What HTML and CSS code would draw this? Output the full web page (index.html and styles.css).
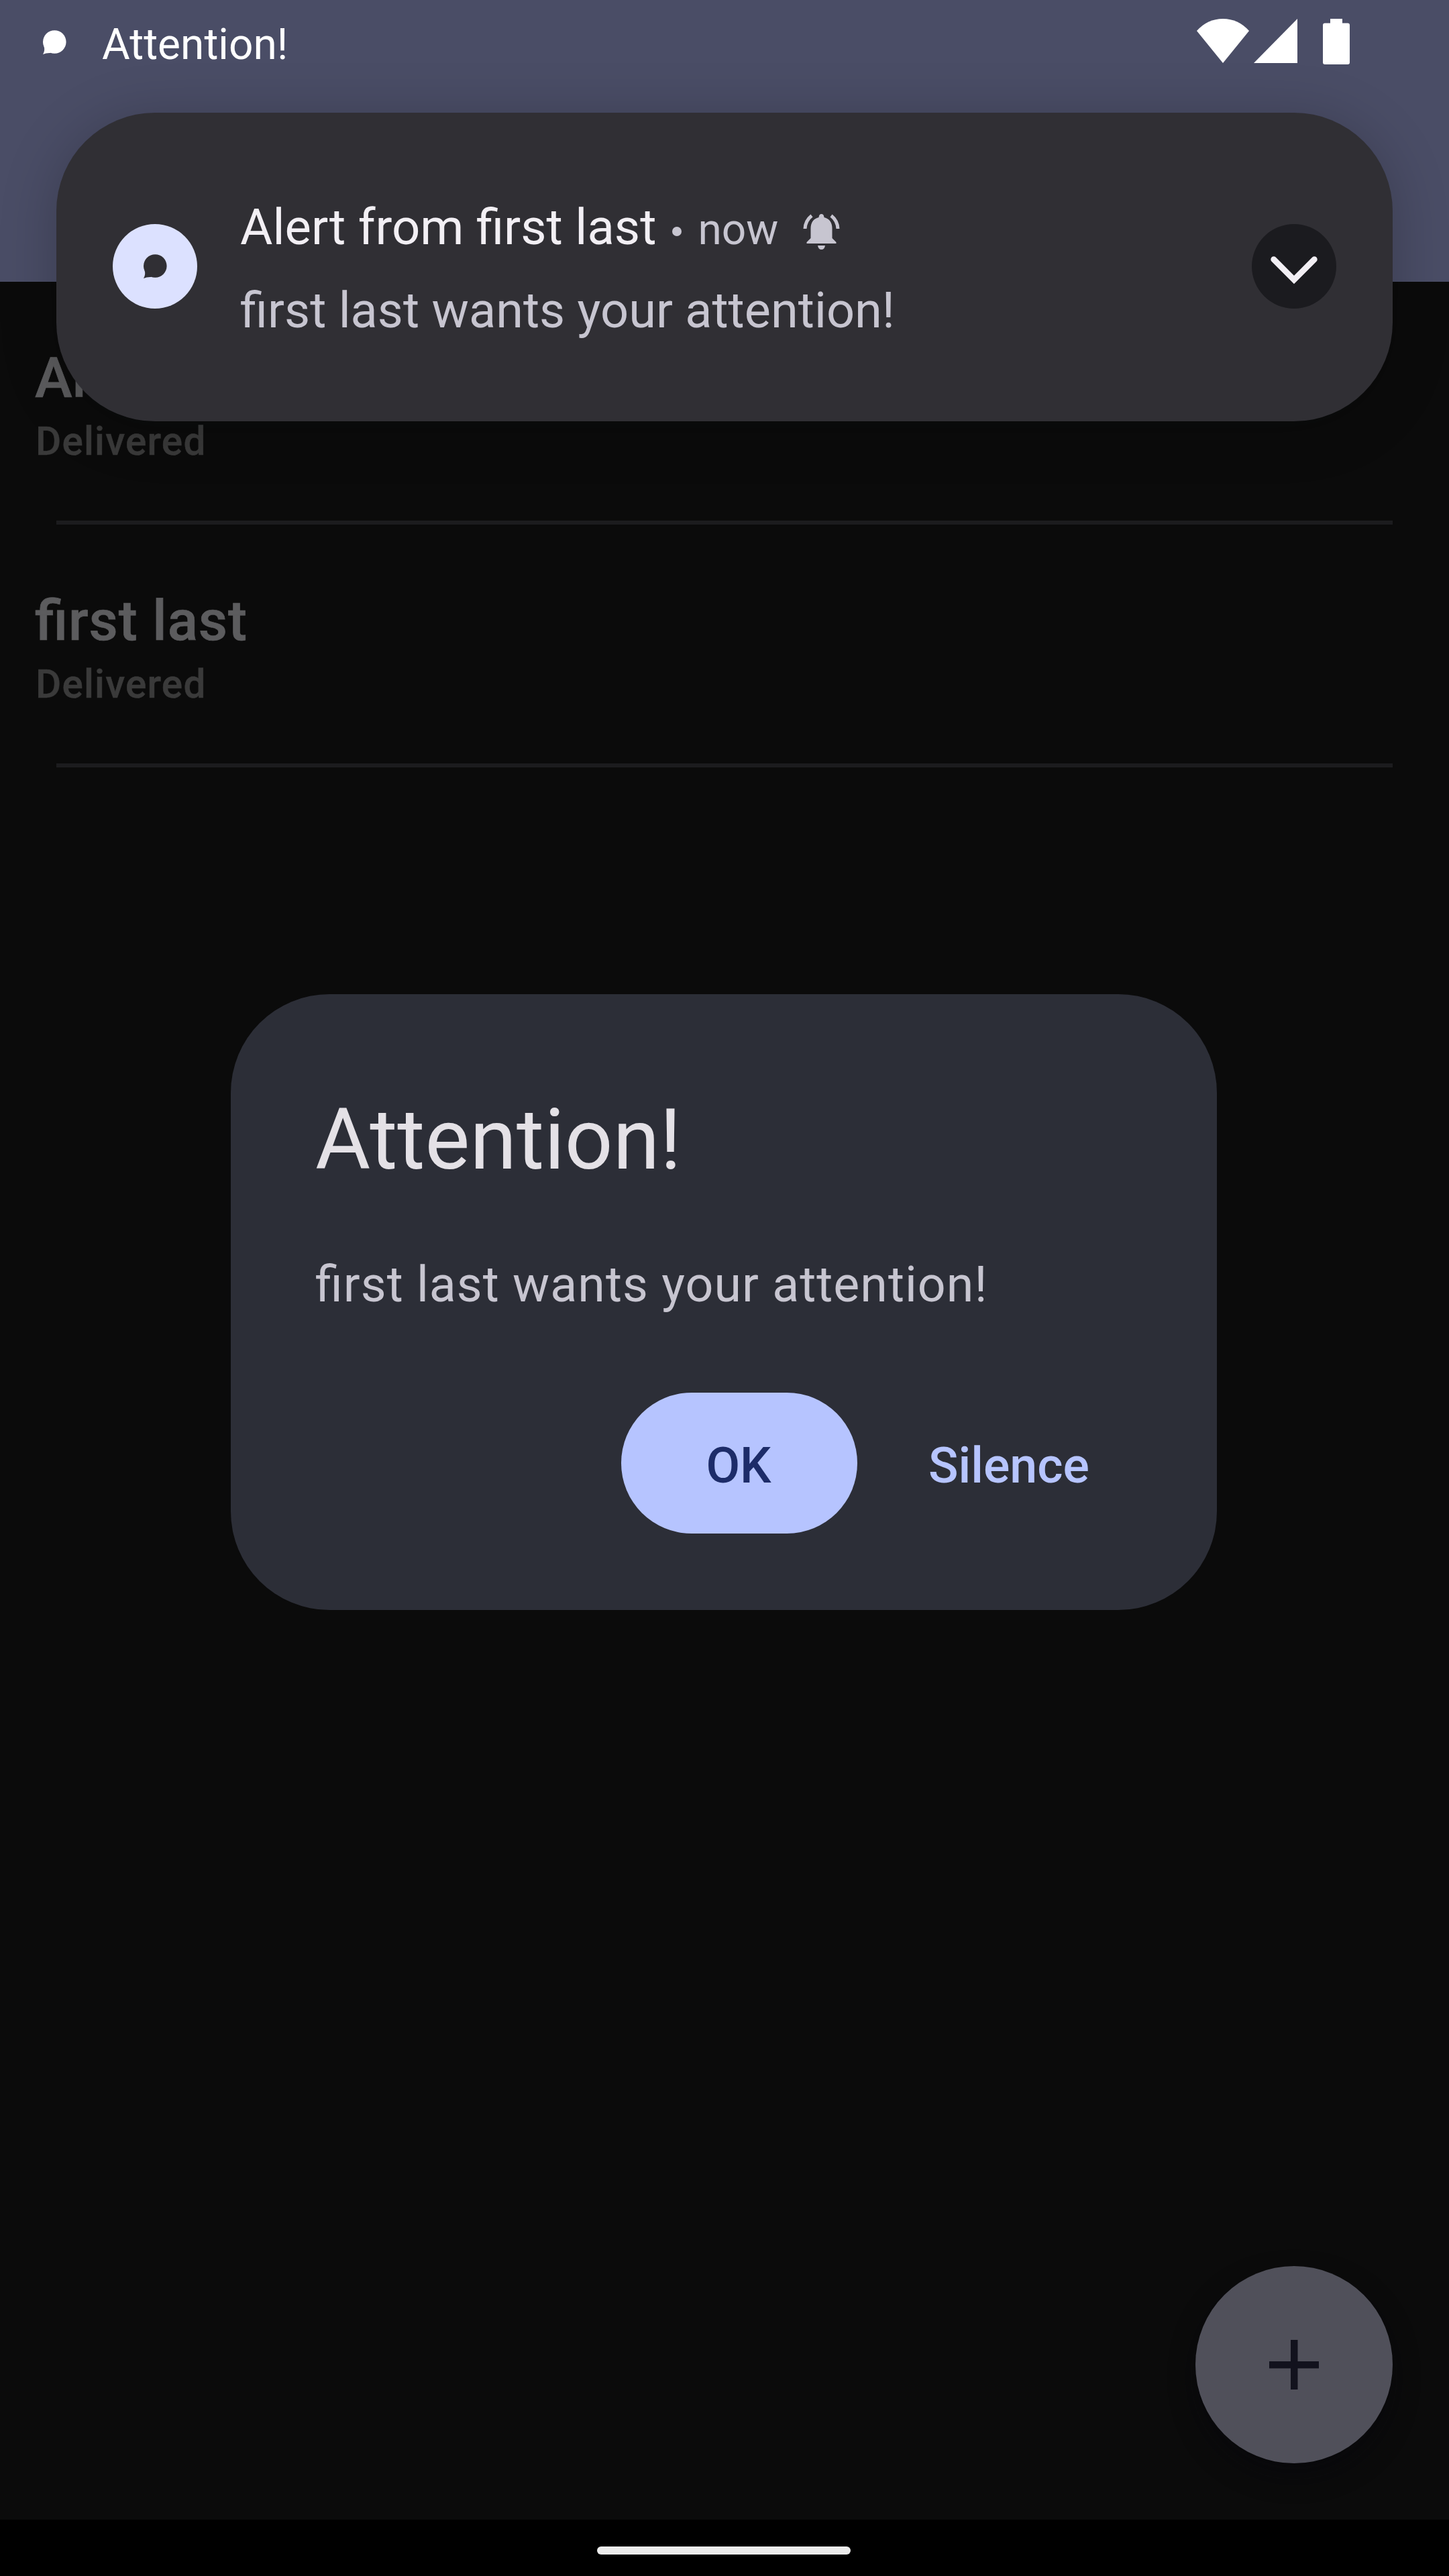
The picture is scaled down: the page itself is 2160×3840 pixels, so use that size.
FILE: index.html
```html
<!DOCTYPE html>
<html lang="en">
<head>
<meta charset="utf-8">
<title>Attention!</title>
<link rel="stylesheet" href="styles.css">
</head>
<body>
<div class="screen">
  <header class="top-bar">
    <div class="status-left">
      <svg class="bubble" viewBox="0 0 36 36"><circle cx="18.300" cy="17.500" r="17.300"/><path d="M2.500 24Q4.500 30 1 36Q6 33.500 13 34Z"/></svg>
      <span class="ticker">Attention!</span>
    </div>
    <svg class="status-icons" viewBox="0 0 228 68">
      <path d="M0 18Q16 0 39 0Q62 0 78 18L39 66Z"/>
      <path d="M85 66L150 0V66Z"/>
      <path d="M199 0H217V6.500H225Q228 6.500 228 9.500V65Q228 68 225 68H191Q188 68 188 65V9.500Q188 6.500 191 6.500H199Z"/>
    </svg>
  </header>

  <main class="list">
    <div class="row">
      <div class="name">An</div>
      <div class="state">Delivered</div>
      <div class="divider"></div>
    </div>
    <div class="row">
      <div class="name">first last</div>
      <div class="state">Delivered</div>
      <div class="divider"></div>
    </div>
  </main>

  <footer class="nav-bar"><div class="handle"></div></footer>

  <div class="fab">
    <svg class="plus" viewBox="0 0 74 74"><path d="M32 0H42.500V32H74V42.500H42.500V74H32V42.500H0V32H32Z"/></svg>
  </div>

  <section class="notification">
    <div class="app-icon">
      <svg class="bubble" viewBox="0 0 36 36"><circle cx="18.300" cy="17.500" r="17.300"/><path d="M2.500 24Q4.500 30 1 36Q6 33.500 13 34Z"/></svg>
    </div>
    <div class="notification-text">
      <div class="notification-head">
        <span class="title">Alert from first last</span>
        <span class="dot"></span>
        <span class="time">now</span>
        <svg class="bell" viewBox="0 0 55 55">
          <path d="M27.500 0Q31 0 31.500 5Q43.500 8 43.500 22V36L49.500 42V44H5.500V42L11.500 36V22Q11.500 8 23.500 5Q24 0 27.500 0Z"/>
          <path d="M22 47H33Q32 53 27.500 53Q23 53 22 47Z"/>
          <path class="ring" d="M13 2.500Q3.500 10 3 22M42 2.500Q51.500 10 52 22"/>
        </svg>
      </div>
      <div class="message">first last wants your attention!</div>
    </div>
    <div class="expand">
      <svg class="chevron" viewBox="0 0 126 126"><path d="M32.700 52.700L63 83L93.300 52.700"/></svg>
    </div>
  </section>

  <section class="dialog">
    <h1 class="dialog-title">Attention!</h1>
    <p class="dialog-body">first last wants your attention!</p>
    <div class="actions">
      <button class="button filled">OK</button>
      <button class="button">Silence</button>
    </div>
  </section>
</div>
</body>
</html>
```

FILE: styles.css
```css
* { box-sizing: border-box; }
body {
  margin: 0;
  background: #0b0b0b;
  font-family: Roboto, "Liberation Sans", sans-serif;
  font-feature-settings: "liga" 1;
}
svg { display: block; }
.screen {
  position: relative;
  display: flex;
  flex-direction: column;
  width: 2160px;
  height: 3840px;
  overflow: hidden;
  background: #0b0b0b;
}

.top-bar {
  display: flex;
  justify-content: space-between;
  align-items: flex-start;
  height: 420px;
  padding: 28px 148px 0 63px;
  background: #4a4d66;
}
.status-left { display: flex; gap: 53px; }
.bubble { width: 36px; height: 36px; fill: #fff; }
.status-left .bubble { margin-top: 17px; }
.ticker { padding-top: 1px; font-size: 64px; line-height: 76px; color: #fff; }
.status-icons { width: 228px; height: 68px; fill: #fff; }

.list { flex: 1; }
.row { height: 362px; padding: 95px 84px 0 52px; }
.name {
  height: 109px;
  font-size: 84px;
  line-height: 98px;
  font-weight: 500;
  letter-spacing: 0.9px;
  white-space: nowrap;
  color: #5c5c5e;
  -webkit-text-stroke: 0.7px #5c5c5e;
}
.state {
  height: 152px;
  padding-left: 1px;
  font-size: 58.5px;
  line-height: 68px;
  font-weight: 500;
  letter-spacing: 1.2px;
  color: #3a3a3a;
  -webkit-text-stroke: 0.5px #3a3a3a;
}
.divider { height: 6px; margin-left: 32px; background: #1c1c1e; }

.nav-bar {
  display: flex;
  justify-content: center;
  height: 84px;
  padding: 40px 2px 0 0;
  background: #000;
}
.handle { width: 378px; height: 12px; border-radius: 6px; background: #ebebeb; }

.fab {
  position: absolute;
  left: 1782px;
  top: 3378px;
  display: flex;
  align-items: center;
  justify-content: center;
  width: 294px;
  height: 294px;
  border-radius: 50%;
  background: #50505a;
  box-shadow: 0 18px 36px rgba(6, 6, 12, 0.5);
}
.plus { width: 74px; height: 74px; fill: #12121d; }

.notification {
  position: absolute;
  left: 84px;
  top: 168px;
  display: flex;
  align-items: center;
  width: 1992px;
  height: 460px;
  padding: 0 84px 2px;
  border-radius: 147px;
  background: #302f34;
  box-shadow: 0 10px 84px rgba(0, 8, 8, 0.22);
}
.app-icon, .expand {
  display: flex;
  align-items: center;
  justify-content: center;
  width: 126px;
  height: 126px;
  border-radius: 50%;
}
.app-icon { background: #dce1ff; }
.app-icon .bubble { fill: #302f34; }
.notification-text { flex: 1; padding: 7px 0 0 64px; }
.notification-head { display: flex; height: 124px; align-items: baseline; }
.title, .message { font-size: 73.9px; line-height: 86px; white-space: nowrap; }
.title { font-size: 74.3px; color: #f2eff4; }
.message { height: 86px; color: #c7c5d0; }
.dot {
  align-self: flex-start;
  width: 14px;
  height: 14px;
  margin: 42px 24px 0 24px;
  border-radius: 50%;
  background: #c7c5d0;
}
.time { width: 118px; font-size: 64px; line-height: 86px; color: #c7c5d0; }
.bell {
  align-self: flex-start;
  width: 55px;
  height: 55px;
  margin: 23px 0 0 39px;
  fill: #c7c5d0;
}
.ring { fill: none; stroke: #c7c5d0; stroke-width: 5; }
.expand { background: #1b1b1f; }
.chevron {
  width: 126px;
  height: 126px;
  fill: none;
  stroke: #f2eff4;
  stroke-width: 8.8px;
  stroke-linecap: round;
}

.dialog {
  position: absolute;
  left: 344px;
  top: 1482px;
  width: 1470px;
  height: 918px;
  padding: 143px 126px 0 126px;
  border-radius: 147px;
  background: #2c2e37;
}
.dialog-title {
  margin: 0;
  height: 221px;
  font-size: 126px;
  line-height: 148px;
  font-weight: 400;
  color: #e4e1e6;
}
.dialog-body {
  margin: 0;
  height: 230px;
  padding-top: 26px;
  font-size: 73.5px;
  line-height: 86px;
  letter-spacing: 1.02px;
  color: #c7c5d0;
}
.actions { display: flex; gap: 41px; padding-left: 456px; }
.button {
  flex: none;
  height: 210px;
  padding: 8px 65px 0;
  border: 0;
  border-radius: 105px;
  background: none;
  font: 500 73.5px/86px Roboto, "Liberation Sans", sans-serif;
  color: #b6c4ff;
}
.filled { width: 352px; padding: 8px 2px 0 0; background: #b6c4ff; color: #1d2c69; }
```
